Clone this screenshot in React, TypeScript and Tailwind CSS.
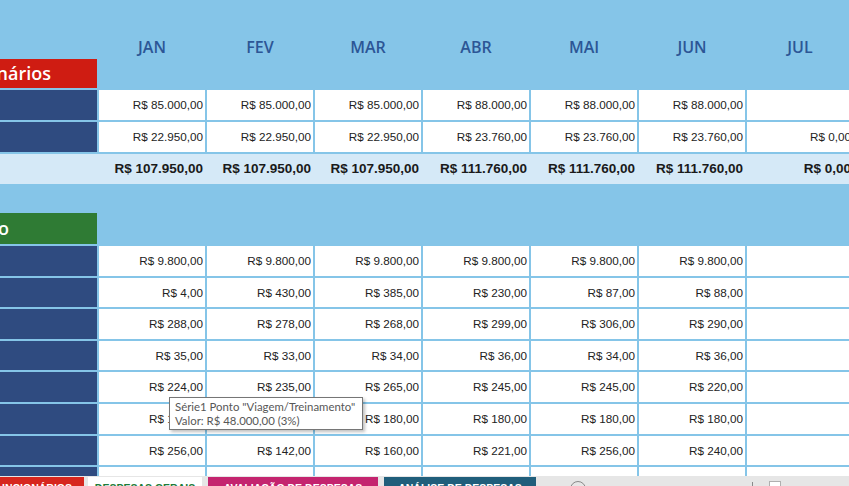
import React from 'react';

const months = ['JAN', 'FEV', 'MAR', 'ABR', 'MAI', 'JUN', 'JUL'];

const topRows: string[][] = [
    ['R$ 85.000,00', 'R$ 85.000,00', 'R$ 85.000,00', 'R$ 88.000,00', 'R$ 88.000,00', 'R$ 88.000,00', ''],
    ['R$ 22.950,00', 'R$ 22.950,00', 'R$ 22.950,00', 'R$ 23.760,00', 'R$ 23.760,00', 'R$ 23.760,00', 'R$ 0,00'],
];

const totals = ['R$ 107.950,00', 'R$ 107.950,00', 'R$ 107.950,00', 'R$ 111.760,00', 'R$ 111.760,00', 'R$ 111.760,00', 'R$ 0,00'];

const expenseRows: string[][] = [
    ['R$ 9.800,00', 'R$ 9.800,00', 'R$ 9.800,00', 'R$ 9.800,00', 'R$ 9.800,00', 'R$ 9.800,00', ''],
    ['R$ 4,00', 'R$ 430,00', 'R$ 385,00', 'R$ 230,00', 'R$ 87,00', 'R$ 88,00', ''],
    ['R$ 288,00', 'R$ 278,00', 'R$ 268,00', 'R$ 299,00', 'R$ 306,00', 'R$ 290,00', ''],
    ['R$ 35,00', 'R$ 33,00', 'R$ 34,00', 'R$ 36,00', 'R$ 34,00', 'R$ 36,00', ''],
    ['R$ 224,00', 'R$ 235,00', 'R$ 265,00', 'R$ 245,00', 'R$ 245,00', 'R$ 220,00', ''],
    ['R$ 180,00', 'R$ 180,00', 'R$ 180,00', 'R$ 180,00', 'R$ 180,00', 'R$ 180,00', ''],
    ['R$ 256,00', 'R$ 142,00', 'R$ 160,00', 'R$ 221,00', 'R$ 256,00', 'R$ 240,00', ''],
    ['', '', '', '', '', '', ''],
];

const row = 'grid grid-cols-[97px_repeat(7,106px)] gap-x-[2px]';

// the sheet is scrolled right, so header labels end at a fixed x and spill off to the left
function ClippedLabel({ text, end, color }: { text: string; end: string; color: string }) {
    return (
        <div className={`${color} h-full overflow-hidden flex items-center`}>
            <div className={`${end} flex justify-end whitespace-nowrap text-white text-[18px] font-semibold font-['Open_Sans',sans-serif]`}>
                {text}
            </div>
        </div>
    );
}

function DataRow({ values, h }: { values: string[]; h: string }) {
    return (
        <div className={`${row} ${h}`}>
            <div className="bg-[#2F4B80]" />
            {values.map((v, i) => (
                <div key={i} className="bg-white flex items-center justify-end pr-[2px] text-[11.7px] text-[#222] whitespace-nowrap">
                    {v}
                </div>
            ))}
        </div>
    );
}

export default function App() {
    return (
        <div className="relative w-[849px] h-[486px] overflow-hidden bg-[#85C5E8] font-['Liberation_Sans',Arial,sans-serif]">
            <div className="h-[476px] overflow-hidden">
                {/* Receitas / funcionários */}
                <div className="flex flex-col gap-y-[2px]">
                    <div className={`${row} h-[88px]`}>
                        <div className="flex flex-col justify-end">
                            <div className="h-[29px]">
                                <ClippedLabel text="Funcionários" end="w-[51px]" color="bg-[#CF1C12]" />
                            </div>
                        </div>
                        {months.map((m) => (
                            <div key={m} className="flex justify-center pt-[37px] text-[16px] leading-[20px] font-semibold text-[#2C5696] font-['Open_Sans',sans-serif]">
                                {m}
                            </div>
                        ))}
                    </div>
                    {topRows.map((r, i) => (
                        <DataRow key={i} values={r} h="h-[30px]" />
                    ))}
                    <div className={`${row} h-[30px] bg-[#D5E9F7]`}>
                        <div />
                        {totals.map((v, i) => (
                            <div key={i} className="flex items-center justify-end pr-[2px] text-[13.5px] font-bold text-[#1a1a1a] whitespace-nowrap">
                                {v}
                            </div>
                        ))}
                    </div>
                </div>

                {/* Despesas */}
                <div className="mt-[29px] flex flex-col gap-y-[2px]">
                    <div className={`${row} h-[31px]`}>
                        <ClippedLabel text="Escritório" end="w-[9px]" color="bg-[#2F7B34]" />
                    </div>
                    {expenseRows.map((r, i) => (
                        <DataRow key={i} values={r} h="h-[29.6px]" />
                    ))}
                </div>
            </div>

            {/* sheet tabs */}
            <div className="h-[10px] bg-[#E6E6E6] flex items-start pt-[1px] text-[10.5px] font-bold leading-[13px] whitespace-nowrap overflow-hidden">
                <div className="w-[84px] h-full bg-[#D7261E] text-white flex justify-end pr-[12px] pt-[5px] overflow-hidden">
                    <span>FUNCIONÁRIOS</span>
                </div>
                <div className="ml-[4px] w-[114px] h-full bg-white text-[#1E7B3A] flex justify-center pt-[5px]">
                    DESPESAS GERAIS
                </div>
                <div className="ml-[6px] w-[170px] h-full bg-[#C4246F] text-white flex justify-center pt-[5px]">
                    AVALIAÇÃO DE DESPESAS
                </div>
                <div className="ml-[6px] w-[152px] h-full bg-[#205E7B] text-white flex justify-center pt-[5px]">
                    ANÁLISE DE DESPESAS
                </div>
                <div className="ml-[34px] mt-[4px] w-[16px] h-[16px] rounded-full border border-[#8a8a8a]" />
                <div className="ml-[166px] mt-[5px] w-[1px] h-[6px] bg-[#8a8a8a]" />
                <div className="ml-[16px] mt-[4px] w-[12px] h-[8px] border border-[#b0b0b0] bg-white" />
            </div>

            {/* chart tooltip */}
            <div className="absolute left-[169px] top-[397px] w-[194px] h-[33px] bg-white border border-[#767676] shadow-[2px_2px_3px_rgba(0,0,0,0.25)] px-[5px] pt-[2px] text-[11.4px] leading-[14px] text-[#575757] font-['Lato',sans-serif] whitespace-nowrap">
                <div>Série1 Ponto "Viagem/Treinamento"</div>
                <div>Valor: R$ 48.000,00 (3%)</div>
            </div>
        </div>
    );
}
